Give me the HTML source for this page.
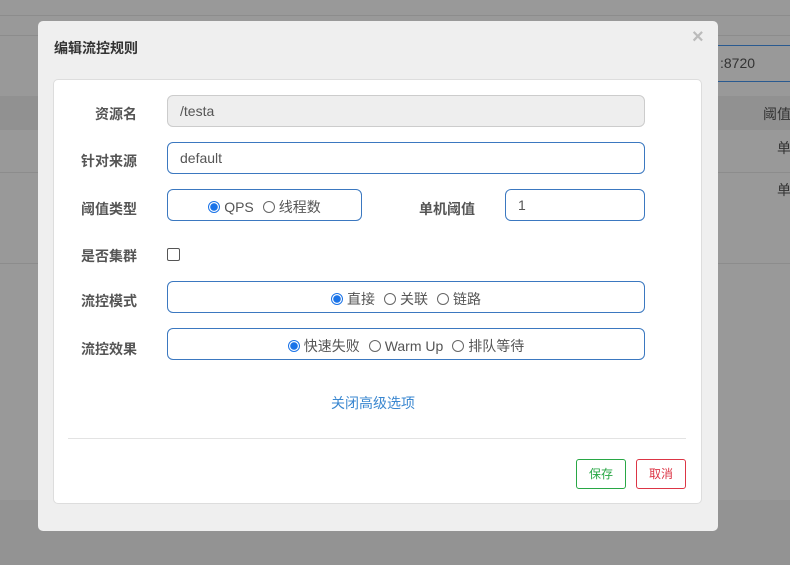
<!DOCTYPE html>
<html><head><meta charset="utf-8"><style>
body{margin:0;width:790px;height:565px;position:relative;overflow:hidden;background:#999;font-family:"Liberation Sans","Noto Sans CJK SC",sans-serif;}
.a{position:absolute;white-space:nowrap}
.lbl{position:absolute;font-size:14px;font-weight:bold;color:#555;width:80px;text-align:right}
.inp{position:absolute;box-sizing:border-box;border:1px solid #3b78c0;border-radius:6px;background:#fff;font-size:14px;color:#555;height:32px;line-height:30px;padding-left:12px}
.r{display:inline-block;width:12px;height:12px;border:1px solid #666;border-radius:50%;box-sizing:border-box;vertical-align:-1px;margin-right:4px;background:#fff}
.r.on{border:1px solid #1a73e8;background:radial-gradient(circle,#1a73e8 3.5px,#fff 4px)}
.rg{position:absolute;box-sizing:border-box;border:1px solid #3b78c0;border-radius:6px;background:#fff;font-size:14px;color:#555;height:32px;line-height:34px;text-align:center;white-space:nowrap}
.rg span{margin-right:9px}
</style></head><body>
<div class="a" style="left:0;top:15px;width:790px;height:1px;background:#8c8c8c"></div>
<div class="a" style="left:0;top:35px;width:790px;height:1px;background:#8c8c8c"></div>
<div class="a" style="left:0;top:96px;width:790px;height:34px;background:#919191"></div>
<div class="a" style="left:0;top:172px;width:790px;height:1px;background:#8c8c8c"></div>
<div class="a" style="left:0;top:263px;width:790px;height:1px;background:#8c8c8c"></div>
<div class="a" style="left:0;top:500px;width:790px;height:65px;background:#939393"></div>
<div class="a" style="left:700px;top:45px;width:90px;height:35px;border-top:1px solid #2a5a90;border-bottom:1px solid #2a5a90;font-size:14px;color:#333;line-height:35px;padding-left:20px">:8720</div>
<div class="a" style="left:763px;top:104px;font-size:14px;color:#333">阈值</div>
<div class="a" style="left:777px;top:138px;font-size:14px;color:#333">单</div>
<div class="a" style="left:777px;top:180px;font-size:14px;color:#333">单</div>

<div class="a" style="left:38px;top:21px;width:680px;height:510px;background:#efefef;border-radius:5px"></div>
<div class="a" style="left:54px;top:38px;font-size:14px;font-weight:bold;color:#333">编辑流控规则</div>
<div class="a" style="left:692px;top:26px;font-size:20px;color:#bbb;font-weight:bold">×</div>
<div class="a" style="left:53px;top:79px;width:649px;height:425px;box-sizing:border-box;background:#fff;border:1px solid #ddd;border-radius:5px"></div>

<div class="lbl" style="left:57px;top:104px">资源名</div>
<div class="inp" style="left:167px;top:95px;width:478px;background:#eee;border-color:#ccc">/testa</div>
<div class="lbl" style="left:57px;top:151px">针对来源</div>
<div class="inp" style="left:167px;top:142px;width:478px">default</div>
<div class="lbl" style="left:57px;top:199px">阈值类型</div>
<div class="rg" style="left:167px;top:189px;width:195px"><i class="r on"></i><span>QPS</span><i class="r"></i>线程数</div>
<div class="lbl" style="left:395px;top:199px">单机阈值</div>
<div class="inp" style="left:505px;top:189px;width:140px">1</div>
<div class="lbl" style="left:57px;top:246px">是否集群</div>
<div class="a" style="left:167px;top:248px;width:13px;height:13px;box-sizing:border-box;border:1px solid #555;border-radius:2px"></div>
<div class="lbl" style="left:57px;top:291px">流控模式</div>
<div class="rg" style="left:167px;top:281px;width:478px"><i class="r on"></i><span>直接</span><i class="r"></i><span>关联</span><i class="r"></i>链路</div>
<div class="lbl" style="left:57px;top:339px">流控效果</div>
<div class="rg" style="left:167px;top:328px;width:478px"><i class="r on"></i><span>快速失败</span><i class="r"></i><span>Warm Up</span><i class="r"></i>排队等待</div>
<div class="a" style="left:331px;top:393px;font-size:14px;color:#3a87d0">关闭高级选项</div>
<div class="a" style="left:68px;top:438px;width:618px;height:1px;background:#e3e3e3"></div>
<div class="a" style="left:576px;top:459px;width:50px;height:30px;box-sizing:border-box;border:1px solid #28a745;border-radius:3px;color:#28a745;font-size:12px;text-align:center;line-height:28px">保存</div>
<div class="a" style="left:636px;top:459px;width:50px;height:30px;box-sizing:border-box;border:1px solid #dc3545;border-radius:3px;color:#dc3545;font-size:12px;text-align:center;line-height:28px">取消</div>
</body></html>
